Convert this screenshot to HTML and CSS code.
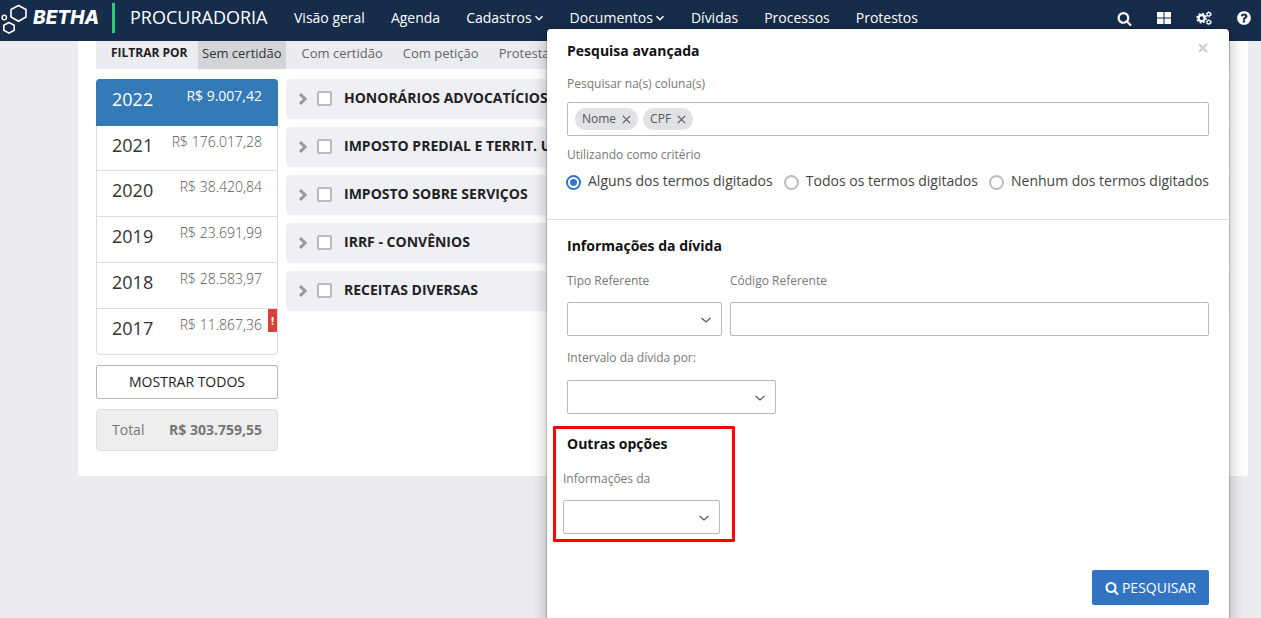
FILE: index.html
```html
<!DOCTYPE html>
<html lang="pt-BR">
<head>
<meta charset="utf-8">
<title>Procuradoria</title>
<link rel="stylesheet" href="styles.css">
</head>
<body>
<svg class="defs" aria-hidden="true">
  <symbol id="search" viewBox="0 0 1792 1792"><path d="M1216 832q0-185-131.5-316.5t-316.5-131.5-316.5 131.5-131.5 316.5 131.5 316.5 316.5 131.5 316.5-131.5 131.5-316.5zm512 832q0 52-38 90t-90 38q-54 0-90-38l-343-342q-179 124-399 124-143 0-273.5-55.5t-225-150-150-225-55.5-273.5 55.5-273.5 150-225 225-150 273.5-55.5 273.5 55.5 225 150 150 225 55.5 273.5q0 220-124 399l343 343q37 37 37 90z"/></symbol>
  <symbol id="down" viewBox="0 0 10 10"><path d="M1.5 3.2 5 6.7l3.500-3.500" fill="none" stroke="currentColor" stroke-width="1.500"/></symbol>
  <symbol id="thin-down" viewBox="0 0 12 12"><path d="M1.500 4 6 8l4.500-4" fill="none" stroke="currentColor" stroke-width="1.200"/></symbol>
  <symbol id="right" viewBox="0 0 10 14"><path d="M2 2l5 5-5 5" fill="none" stroke="currentColor" stroke-width="3"/></symbol>
</svg>

<header class="topbar">
  <a class="brand" href="#">
    <svg class="brand-mark line-icon" viewBox="0 0 28 32" stroke="#fff" stroke-width="1.600">
      <path d="M18.500 3.500 26 7.500v7.500l-7.500 4.300L11 15V7.500z"/>
      <path d="M9 20.500l5.200 2.800v5L9 31.100l-5.200-2.800v-5z"/>
      <circle cx="4.300" cy="15.500" r="2.200" stroke-width="1.400"/>
    </svg>
    <span class="brand-name">BETHA</span>
  </a>
  <span class="product">PROCURADORIA</span>
  <nav class="menu">
    <a href="#">Visão geral</a>
    <a href="#">Agenda</a>
    <a href="#">Cadastros<svg class="caret"><use href="#down"/></svg></a>
    <a href="#">Documentos<svg class="caret"><use href="#down"/></svg></a>
    <a href="#">Dívidas</a>
    <a href="#">Processos</a>
    <a href="#">Protestos</a>
  </nav>
  <div class="tools">
    <button type="button" aria-label="Pesquisar"><svg viewBox="0 0 16 16"><use href="#search" x="1" y="1" width="15" height="15"/></svg></button>
    <button type="button" aria-label="Aplicativos"><svg viewBox="0 0 16 16"><path d="M1 2h6.500v5.500H1zM8.500 2H15v5.500H8.500zM1 8.500h6.500V14H1zM8.500 8.500H15V14H8.500z"/></svg></button>
    <button type="button" aria-label="Configurações"><svg class="line-icon" viewBox="0 0 16 16" stroke="#fff">
      <circle cx="5.600" cy="8.200" r="3" stroke-width="2.200"/>
      <circle cx="5.600" cy="8.200" r="4.600" stroke-width="1.600" stroke-dasharray="1.900 1.713"/>
      <circle cx="12.800" cy="4.300" r="1.700" stroke-width="1.200"/>
      <circle cx="12.800" cy="4.300" r="2.600" stroke-width="1" stroke-dasharray="1.400 1.323"/>
      <circle cx="12.800" cy="12.200" r="1.700" stroke-width="1.200"/>
      <circle cx="12.800" cy="12.200" r="2.600" stroke-width="1" stroke-dasharray="1.400 1.323"/>
    </svg></button>
    <button type="button" aria-label="Ajuda"><svg viewBox="0 0 1792 1792"><path d="M1024 1376v-192q0-14-9-23t-23-9h-192q-14 0-23 9t-9 23v192q0 14 9 23t23 9h192q14 0 23-9t9-23zm256-672q0-88-55.500-163t-138.500-116-170-41q-243 0-371 213-15 24 8 42l132 100q7 6 19 6 16 0 25-12 53-68 86-92 34-24 86-24 48 0 85.500 26t37.500 59q0 38-20 61t-68 45q-63 28-115.500 86.500t-52.500 125.500v36q0 14 9 23t23 9h192q14 0 23-9t9-23q0-19 21.500-49.500t54.500-49.500q32-18 49-28.500t46-35 44.500-48 28-60.500 12.500-81zm384 192q0 209-103 385.500t-279.500 279.500-385.500 103-385.500-103-279.500-279.500-103-385.500 103-385.500 279.500-279.500 385.500-103 385.500 103 279.500 279.500 103 385.500z"/></svg></button>
  </div>
</header>

<main class="page">
  <div class="filters">
    <strong>FILTRAR POR</strong>
    <a class="active" href="#">Sem certidão</a>
    <a href="#">Com certidão</a>
    <a href="#">Com petição</a>
    <a href="#">Protestadas</a>
  </div>
  <div class="columns">
    <aside class="side">
      <div class="years">
        <a class="year selected" href="#"><span>2022</span><em>R$ 9.007,42</em></a>
        <a class="year" href="#"><span>2021</span><em>R$ 176.017,28</em></a>
        <a class="year" href="#"><span>2020</span><em>R$ 38.420,84</em></a>
        <a class="year" href="#"><span>2019</span><em>R$ 23.691,99</em></a>
        <a class="year" href="#"><span>2018</span><em>R$ 28.583,97</em></a>
        <a class="year" href="#"><span>2017</span><em>R$ 11.867,36</em><b class="alert">!</b></a>
      </div>
      <button class="show-all" type="button">MOSTRAR TODOS</button>
      <div class="total"><span>Total</span><strong>R$ 303.759,55</strong></div>
    </aside>
    <div class="groups">
      <div class="group"><svg class="arrow"><use href="#right"/></svg><input type="checkbox" id="g1"><label for="g1">HONORÁRIOS ADVOCATÍCIOS</label></div>
      <div class="group"><svg class="arrow"><use href="#right"/></svg><input type="checkbox" id="g2"><label for="g2">IMPOSTO PREDIAL E TERRIT. U</label></div>
      <div class="group"><svg class="arrow"><use href="#right"/></svg><input type="checkbox" id="g3"><label for="g3">IMPOSTO SOBRE SERVIÇOS</label></div>
      <div class="group"><svg class="arrow"><use href="#right"/></svg><input type="checkbox" id="g4"><label for="g4">IRRF - CONVÊNIOS</label></div>
      <div class="group"><svg class="arrow"><use href="#right"/></svg><input type="checkbox" id="g5"><label for="g5">RECEITAS DIVERSAS</label></div>
    </div>
  </div>
</main>

<form class="panel" role="dialog" aria-labelledby="panel-title">
  <section class="block first">
    <div class="panel-head">
      <h2 id="panel-title">Pesquisa avançada</h2>
      <button class="close" type="button" aria-label="Fechar"><svg viewBox="0 0 10 10"><path d="M1 1l8 8M9 1l-8 8" stroke="currentColor" stroke-width="2"/></svg></button>
    </div>
    <label class="caption" for="cols">Pesquisar na(s) coluna(s)</label>
    <div class="chips">
      <span class="chip">Nome<button type="button" aria-label="Remover Nome"><svg viewBox="0 0 10 10"><path d="M1 1l8 8M9 1l-8 8" stroke="currentColor" stroke-width="1.200"/></svg></button></span>
      <span class="chip">CPF<button type="button" aria-label="Remover CPF"><svg viewBox="0 0 10 10"><path d="M1 1l8 8M9 1l-8 8" stroke="currentColor" stroke-width="1.200"/></svg></button></span>
      <input id="cols" type="text">
    </div>
    <span class="caption" id="crit">Utilizando como critério</span>
    <div class="radios" role="radiogroup" aria-labelledby="crit">
      <label><input type="radio" name="crit" checked>Alguns dos termos digitados</label>
      <label><input type="radio" name="crit">Todos os termos digitados</label>
      <label><input type="radio" name="crit">Nenhum dos termos digitados</label>
    </div>
  </section>
  <section class="block debt">
    <h2>Informações da dívida</h2>
    <div class="pair">
      <div class="field narrow"><label for="tipo">Tipo Referente</label><div class="select"><select id="tipo"></select><svg><use href="#thin-down"/></svg></div></div>
      <div class="field wide"><label for="codigo">Código Referente</label><input id="codigo" class="text" type="text"></div>
    </div>
    <div class="field interval"><label for="intervalo">Intervalo da dívida por:</label><div class="select"><select id="intervalo"></select><svg><use href="#thin-down"/></svg></div></div>
  </section>
  <section class="others">
    <h2>Outras opções</h2>
    <div class="field"><label for="info">Informações da</label><div class="select"><select id="info"></select><svg><use href="#thin-down"/></svg></div></div>
  </section>
  <div class="actions"><button class="submit" type="submit"><svg><use href="#search"/></svg>PESQUISAR</button></div>
</form>
</body>
</html>
```
FILE: styles.css
```css
* { box-sizing: border-box; }
body {
  margin: 0;
  min-height: 100vh;
  position: relative;
  overflow: hidden;
  background: #ebecf0;
  font-family: "Open Sans", "Noto Sans", sans-serif;
  font-size: 14px;
  line-height: 20px;
  color: #222;
}
a { color: inherit; text-decoration: none; }
button { font: inherit; border: 0; padding: 0; background: none; color: inherit; cursor: pointer; }
h2 { margin: 0; font-size: 14px; line-height: 20px; font-weight: 700; color: #111; }
svg { display: block; flex: none; fill: currentColor; }
.line-icon { fill: none; }
.defs { display: none; }

.topbar {
  display: flex;
  align-items: center;
  height: 41px;
  padding: 0 9px 5px 0;
  background: #162c4a;
  color: #fff;
}
.brand { display: flex; align-items: center; height: 30px; width: 115px; border-right: 3px solid #27cf78; }
.brand-mark { width: 28px; height: 32px; margin-right: 5px; }
.brand-name { font: italic 800 19px/20px Inter, sans-serif; }
.product { margin-left: 15px; width: 164px; font-size: 18px; line-height: 20px; padding-bottom: 3px; white-space: nowrap; }
.menu { display: flex; gap: 26px; white-space: nowrap; }
.menu a { display: flex; align-items: center; }
.caret { width: 10px; height: 10px; margin-left: 2px; }
.tools { display: flex; gap: 24px; margin-left: auto; }
.tools svg { width: 16px; height: 16px; }

.page { margin: 0 13px 0 78px; padding: 0 18px 25px; background: #fff; border-radius: 0 0 3px 3px; }
.filters { display: flex; height: 28px; line-height: 25px; font-size: 13px; background: #ebecf0; color: #666; white-space: nowrap; }
.filters strong { width: 102px; padding-left: 15px; font-size: 12px; line-height: 24px; color: #222; }
.filters a { padding: 0 4px; margin-right: 12px; }
.filters .active { background: #d3d4d7; color: #333; }

.columns { display: flex; gap: 8px; padding-top: 10px; }
.side { width: 182px; flex: none; }
.years { border: 1px solid #ddd; border-radius: 4px; }
.year { display: flex; justify-content: space-between; position: relative; height: 46px; padding: 9px 15px 0; border-top: 1px solid #ddd; }
.year span { font-size: 18px; line-height: 20px; color: #333; }
.year em { font-style: normal; font-weight: 300; line-height: 14px; color: #555; }
.year.selected { height: 47px; margin: -1px -1px 0; padding: 9px 16px 0; border-radius: 4px 4px 0 0; background: #337ab7; border-color: #337ab7; }
.year.selected span, .year.selected em { color: #fff; }
.year.selected em { font-weight: 500; }
.year.selected + .year { border-top: 0; height: 44px; }
.alert { position: absolute; top: 0; right: 0; width: 9px; height: 23px; background: #d9403a; color: #fff; font-size: 11px; line-height: 24px; text-align: center; }
.show-all { display: block; width: 100%; height: 34px; margin-top: 10px; border: 1px solid #b5b5b5; border-radius: 2px; background: #fff; }
.total { display: flex; justify-content: space-between; margin-top: 10px; padding: 10px 15px; border: 1px solid #ddd; border-radius: 4px; background: #eee; color: #777; }

.groups { flex: 1; display: flex; flex-direction: column; gap: 8px; }
.group { display: flex; align-items: center; height: 40px; padding: 0 12px; border-radius: 4px; background: #eff0f5; font-weight: 700; white-space: nowrap; }
.group label { line-height: 20px; padding-bottom: 2px; }
.arrow { width: 10px; height: 14px; color: #999; }
.group input { appearance: none; width: 15px; height: 15px; margin: 0 12px 1px 9px; border: 2px solid #bbb; border-radius: 2px; background: #fff; }

.panel {
  position: absolute;
  top: 29px;
  right: 32px;
  width: 682px;
  min-height: calc(100% - 24px);
  background: #fff;
  border-radius: 4px;
  box-shadow: 0 0 0 1px rgba(0, 0, 0, .16), 0 4px 16px rgba(0, 0, 0, .3);
}
.block { padding: 0 20px; }
.first { padding-top: 12px; padding-bottom: 28px; border-bottom: 1px solid #e0e0e0; }
.panel-head { display: flex; justify-content: space-between; }
.close { width: 12px; height: 14px; color: #ccc; }
.close svg { width: 10px; height: 10px; margin: 1px; }
.caption, .field label { display: block; font-size: 12px; line-height: 20px; color: #777; }
.caption { margin-top: 13px; }
.chips { display: flex; align-items: center; gap: 5px; height: 34px; margin-top: 8px; padding: 0 7px; border: 1px solid #b9b9b9; border-radius: 2px; }
.chips + .caption { margin-top: 9px; }
.chips input { flex: 1; min-width: 0; border: 0; outline: 0; font: inherit; }
.chip { display: flex; align-items: center; gap: 6px; height: 22px; padding: 0 7px; border-radius: 11px; background: #e1e2e6; color: #555; font-size: 12px; }
.chip svg { width: 9px; height: 9px; }
.radios { display: flex; justify-content: space-between; margin-top: 6px; white-space: nowrap; color: #444; }
.radios label { display: flex; gap: 7px; }
.radios input { appearance: none; width: 15px; height: 15px; margin: 4px 0 0 -1px; border: 2px solid #bbb; border-radius: 50%; }
.radios input:checked { border-color: #3374c2; background: radial-gradient(circle, #3374c2 3px, #fff 4px); }

.debt { padding-top: 16px; padding-bottom: 12px; }
.pair { display: flex; gap: 8px; margin: 15px 0 12px; }
.narrow { width: 155px; }
.wide { flex: 1; }
.interval { width: 209px; }
.text, .select select { display: block; width: 100%; height: 34px; padding: 0 8px; border: 1px solid #b9b9b9; border-radius: 2px; background: #fff; font: inherit; }
.text, .select { margin-top: 11px; }
.interval .select { margin-top: 12px; }
.select { display: grid; align-items: center; }
.select select, .select svg { grid-area: 1 / 1; }
.select select { appearance: none; }
.select svg { width: 12px; height: 12px; justify-self: end; margin: 2px 10px 0 0; color: #555; pointer-events: none; }

.others { width: 182px; margin-left: 6px; padding: 5px 12px 5px 7px; border: 3px solid #f00; border-radius: 1px; }
.others h2 { padding-left: 4px; margin-bottom: 15px; }
.actions { display: flex; justify-content: flex-end; padding: 28px 20px; }
.submit { display: flex; align-items: center; gap: 3px; height: 35px; padding: 0 13px; border-radius: 2px; background: #3374c2; color: #fff; }
.submit svg { width: 14px; height: 14px; }
```
